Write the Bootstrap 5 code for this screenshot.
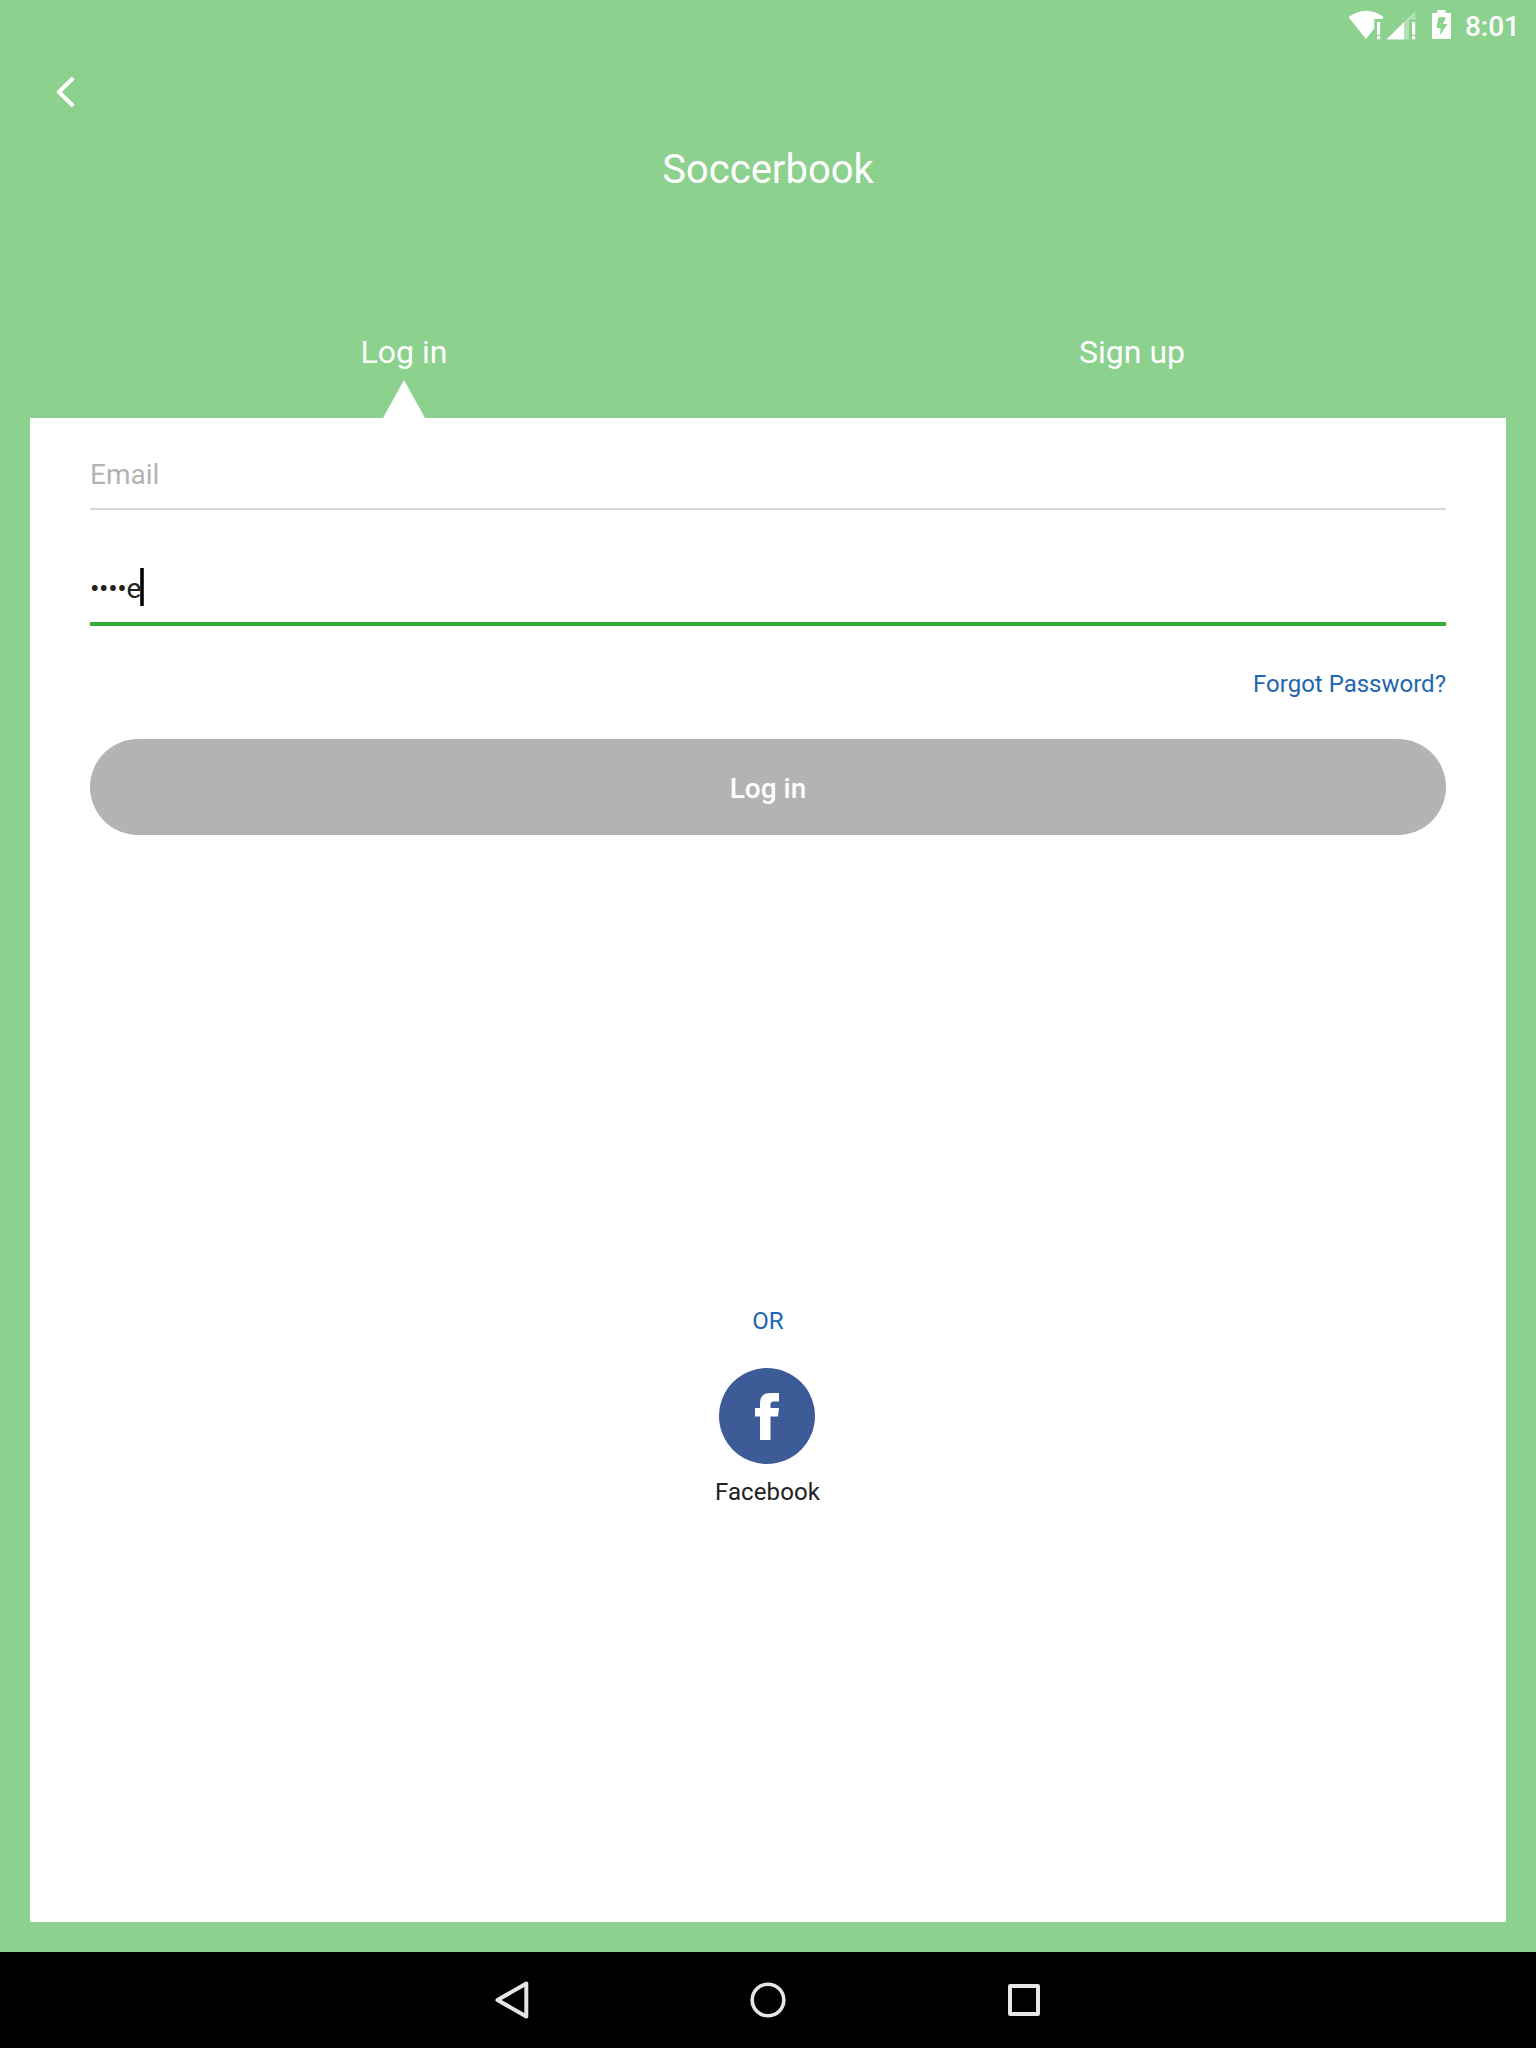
<!DOCTYPE html>
<html lang="en">
<head>
<meta charset="utf-8">
<meta name="viewport" content="width=device-width, initial-scale=1">
<title>Soccerbook</title>
<link href="https://cdn.jsdelivr.net/npm/bootstrap@5.3.0/dist/css/bootstrap.min.css" rel="stylesheet">
<style>
  body { font-family: Roboto, "Liberation Sans", sans-serif; background: #8cd18e; color: #212121; }
  .screen { height: 2048px; }
  .t24 { font-size: 24px; line-height: 32px; }
  .t28 { font-size: 28px; line-height: 38px; }
  .status-bar { height: 52px; padding-right: 16px; }
  .status-bar .clock { font-size: 28px; line-height: 52px; padding-top: 1px; height: 52px; font-weight: 500; margin-left: 12px; }
  .back-row { height: 80px; padding-left: 54px; }
  .app-title { font-size: 40px; line-height: 76px; height: 176px; font-weight: 400; }
  .auth-tabs { height: 110px; padding: 0 40px; font-size: 32px; }
  .auth-tabs .tab-item { line-height: 88px; }
  .auth-tabs svg { top: 72px; left: 50%; margin-left: -21px; }
  .panel { margin: 0 30px 30px; padding: 38px 60px 0; background: #fff; }
  .field { color: #b3b3b3; height: 54px; border-bottom: 2px solid #d6d6d6; }
  .field.focused { height: 58px; margin-top: 58px; color: #212121; border-bottom: 4px solid #33ab37; }
  .typed { padding-top: 2px; }
  .bullets { letter-spacing: -.35px; }
  .caret { width: 4px; height: 38px; background: linear-gradient(90deg, #555, #000 35%, #000 65%, #555); margin-left: -1px; }
  .bluelink { color: #1e66b0; }
  .forgot { margin-top: 42px; }
  .login-btn, .login-btn:disabled { height: 96px; margin-top: 39px; padding: 4px 0 0; background: #b3b3b3; color: #fff; border: 0; opacity: 1; font-weight: 500; }
  .or-label { margin-top: 470px; }
  .fb { margin: 31px 2px 12px 0; }
  .fb-name { letter-spacing: .1px; margin-right: 1px; }
  .sys-nav { height: 96px; gap: 208px; }
</style>
</head>
<body>
<div class="screen d-flex flex-column overflow-hidden">
  <header class="text-white">
    <div class="status-bar d-flex justify-content-end align-items-center">
      <svg width="106" height="52" viewBox="1347 0 106 52" fill="#fff">
        <path d="M1348.600 17.200C1359 8.500 1373.500 8.500 1383.600 17.200L1382.300 19H1374.300V28.500L1366 39Z"/>
        <path d="M1377 22h3.200v12.800H1377zM1377 36h3.200v3.200H1377z"/>
        <path d="M1415.500 10.700V19.500H1409V39.400H1404V22Z" fill-opacity=".35"/>
        <path d="M1404 22V39.400H1386.500Z"/>
        <path d="M1412 22h3.200v12.800H1412zM1412 36h3.200v3.200H1412z"/>
        <path fill-rule="evenodd" d="M1437.300 10h8.200v3h5.500v26H1432V13h5.300zM1438.500 17.300L1436.500 28H1440.800L1439.700 35.500L1447.500 24H1443L1446 17.300Z"/>
      </svg>
      <span class="clock">8:01</span>
    </div>
    <div class="back-row">
      <svg class="d-block" width="24" height="80" viewBox="54 52 24 80" fill="none" stroke="#fff" stroke-width="4"><path d="M73.200 78L59 92L73.200 106"/></svg>
    </div>
    <h1 class="app-title text-center m-0">Soccerbook</h1>
    <nav class="auth-tabs d-flex text-center">
      <div class="tab-item position-relative w-50">Log in
        <svg class="position-absolute" width="42" height="38" fill="#fff"><path d="M21 0L42 38H0Z"/></svg>
      </div>
      <div class="tab-item w-50">Sign up</div>
    </nav>
  </header>
  <main class="panel flex-grow-1">
    <div class="field t28">Email</div>
    <div class="field focused t28 d-flex"><span class="typed bullets">••••</span><span class="typed">e</span><span class="caret"></span></div>
    <div class="forgot t24 text-end bluelink">Forgot Password?</div>
    <button class="login-btn btn rounded-pill w-100 t28" disabled>Log in</button>
    <div class="d-flex flex-column align-items-center t24">
      <div class="or-label bluelink">OR</div>
      <svg class="fb" width="96" height="96" viewBox="0 0 96 96"><circle cx="48" cy="48" r="48" fill="#3c5b97"/><path d="M41 72V48.500H36V40H41V35Q41 25 51.500 25H60V33.500H54.500Q51.500 33.500 51.500 36.500V40H60L59 48.500H51.500V72Z" fill="#fff"/></svg>
      <div class="fb-name">Facebook</div>
    </div>
  </main>
  <footer class="sys-nav bg-black d-flex justify-content-center align-items-center">
    <svg width="48" height="48" viewBox="488 1976 48 48" fill="none" stroke="#e6e6e6" stroke-width="4" stroke-linejoin="round"><path d="M526.300 1983.500V2016.500L497.500 2000Z"/></svg>
    <svg width="48" height="48" viewBox="744 1976 48 48" fill="none" stroke="#e6e6e6" stroke-width="3.600"><circle cx="768" cy="2000" r="15.800"/></svg>
    <svg width="48" height="48" viewBox="1000 1976 48 48" fill="none" stroke="#e6e6e6" stroke-width="4" stroke-linejoin="round"><path d="M1010 1986h28v28h-28z"/></svg>
  </footer>
</div>
<script src="https://cdn.jsdelivr.net/npm/bootstrap@5.3.0/dist/js/bootstrap.bundle.min.js"></script>
</body>
</html>
